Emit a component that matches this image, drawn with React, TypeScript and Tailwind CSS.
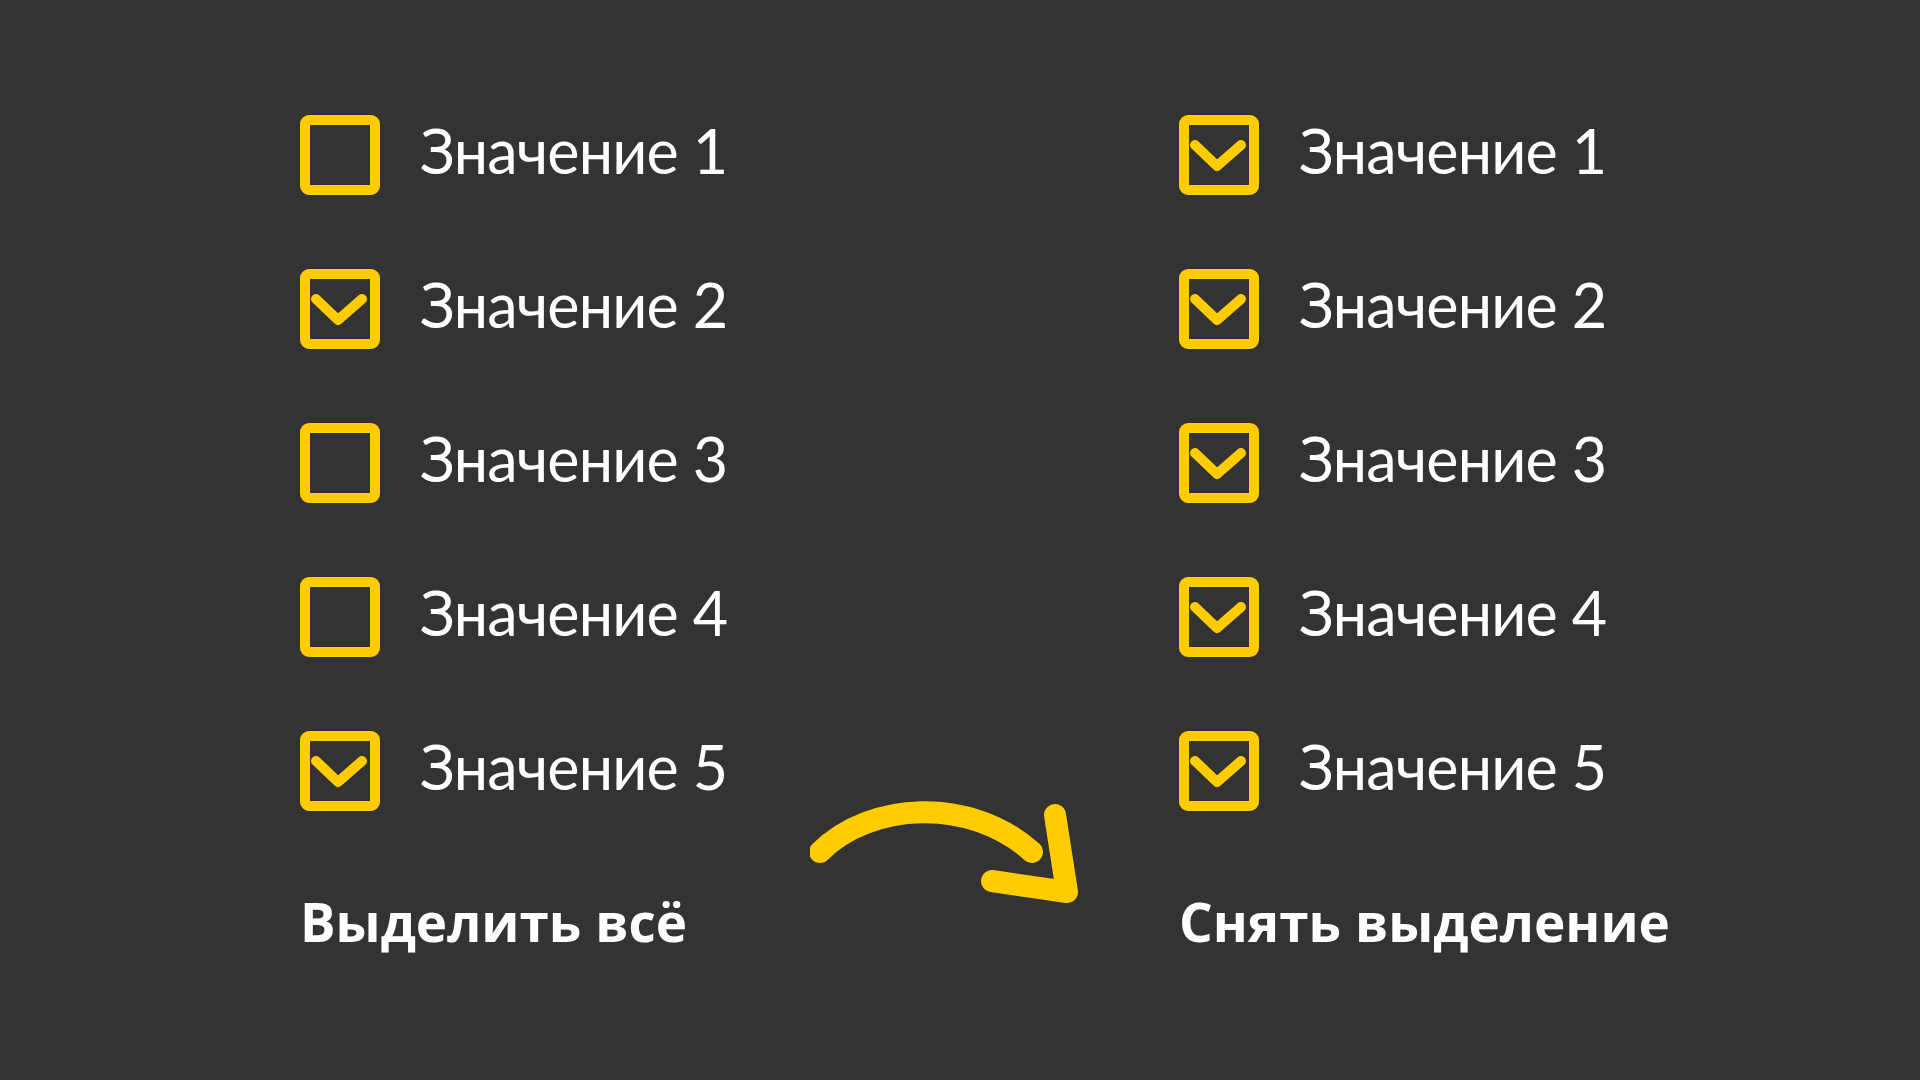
import { useState } from "react";

type Item = { label: string; checked: boolean };

const LEFT: Item[] = [
  { label: "Значение 1", checked: false },
  { label: "Значение 2", checked: true },
  { label: "Значение 3", checked: false },
  { label: "Значение 4", checked: false },
  { label: "Значение 5", checked: true },
];

const RIGHT: Item[] = LEFT.map((i) => ({ ...i, checked: true }));

function Box({ checked }: { checked: boolean }) {
  return (
    <svg width="80" height="80" viewBox="0 0 80 80" className="shrink-0">
      <rect x="5" y="5" width="70" height="70" rx="4" fill="none" stroke="#ffcc00" strokeWidth="10" />
      {checked && (
        <path
          d="M16 30 L38 51 L62 30"
          fill="none"
          stroke="#ffcc00"
          strokeWidth="10"
          strokeLinecap="round"
          strokeLinejoin="round"
        />
      )}
    </svg>
  );
}

function Column({ items, action }: { items: Item[]; action: string }) {
  const [state, setState] = useState(items);
  return (
    <div className="flex flex-col">
      <div className="flex flex-col gap-[74px]">
        {state.map((it, i) => (
          <button
            key={it.label}
            className="flex h-[80px] items-center gap-[40px] text-left"
            onClick={() =>
              setState((s) => s.map((x, j) => (j === i ? { ...x, checked: !x.checked } : x)))
            }
          >
            <Box checked={it.checked} />
            <span className="pb-[8px] text-[61px] leading-[72px] tracking-[-0.8px] text-white">
              {it.label}
            </span>
          </button>
        ))}
      </div>
      <div
        className="mt-[71px] text-[53px] font-bold leading-[80px] text-white"
        style={{ fontFamily: "'Open Sans', sans-serif" }}
      >
        {action}
      </div>
    </div>
  );
}

export default function App() {
  return (
    <div
      className="flex min-h-screen w-full bg-[#333333] pl-[300px] pt-[115px]"
      style={{ fontFamily: "Lato, 'Open Sans', sans-serif" }}
    >
      <div className="w-[510px]">
        <Column items={LEFT} action="Выделить всё" />
      </div>
      <div className="w-[369px] pt-[685px]">
        <svg width="280" height="110" viewBox="0 0 280 110">
          <path
            d="M10 52 C 60 2, 160 -4, 222 52"
            fill="none"
            stroke="#ffcc00"
            strokeWidth="22"
            strokeLinecap="round"
          />
          <path
            d="M245 15 L257 92 L182 81"
            fill="none"
            stroke="#ffcc00"
            strokeWidth="22"
            strokeLinecap="round"
            strokeLinejoin="round"
          />
        </svg>
      </div>
      <Column items={RIGHT} action="Снять выделение" />
    </div>
  );
}
